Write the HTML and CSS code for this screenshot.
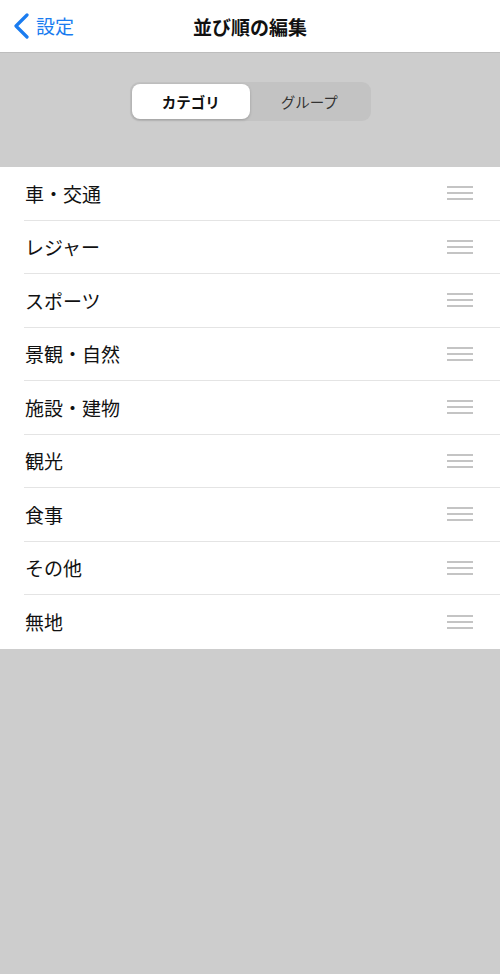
FILE: index.html
```html
<!DOCTYPE html>
<html lang="ja">
<head>
    <meta charset="UTF-8">
    <meta name="viewport" content="width=device-width, initial-scale=1.0">
    <title>並び順の編集</title>
    <link rel="stylesheet" href="styles.css">
</head>
<body>

    <div class="navbar">
        <a class="back" href="#">
            <svg class="chevron" width="17" height="26" viewBox="0 0 17 26">
                <path d="M14 2 L3 13 L14 24" fill="none" stroke="#1a7cf0" stroke-width="3.2" stroke-linecap="round" stroke-linejoin="round"/>
            </svg>
            <span>設定</span>
        </a>
        <h1>並び順の編集</h1>
    </div>

    <div class="header">
        <div class="segment">
            <div class="seg-item active">カテゴリ</div>
            <div class="seg-item">グループ</div>
        </div>
    </div>

    <ul class="list">
        <li><span>車・交通</span><i class="handle"></i></li>
        <li><span>レジャー</span><i class="handle"></i></li>
        <li><span>スポーツ</span><i class="handle"></i></li>
        <li><span>景観・自然</span><i class="handle"></i></li>
        <li><span>施設・建物</span><i class="handle"></i></li>
        <li><span>観光</span><i class="handle"></i></li>
        <li><span>食事</span><i class="handle"></i></li>
        <li><span>その他</span><i class="handle"></i></li>
        <li><span>無地</span><i class="handle"></i></li>
    </ul>

</body>
</html>
```

FILE: styles.css
```css
body {
    margin: 0;
    background-color: #cdcdcd;
    font-family: "Noto Sans CJK JP", "Noto Sans", sans-serif;
    color: #111;
}
.navbar {
    position: relative;
    height: 52px;
    background-color: #fff;
    border-bottom: 1px solid #bdbdbd;
    display: flex;
    align-items: center;
    justify-content: center;
}
.navbar h1 {
    margin: 0;
    font-size: 19px;
    font-weight: bold;
    color: #111;
}
.back {
    position: absolute;
    left: 13px;
    top: 13px;
    display: flex;
    align-items: center;
    gap: 6px;
    color: #1a7cf0;
    text-decoration: none;
    font-size: 19px;
}
.back span {
    line-height: 26px;
}
.header {
    height: 114px;
    display: flex;
    justify-content: center;
    padding-top: 29px;
    box-sizing: border-box;
}
.segment {
    width: 241px;
    height: 39px;
    background-color: #c3c3c3;
    border-radius: 9px;
    padding: 2px;
    box-sizing: border-box;
    display: flex;
}
.seg-item {
    flex: 1;
    display: flex;
    align-items: center;
    justify-content: center;
    font-size: 14.5px;
    color: #333;
    border-radius: 8px;
}
.seg-item.active {
    background-color: #fff;
    font-weight: bold;
    color: #111;
    box-shadow: 0 1px 3px rgba(0, 0, 0, 0.2);
}
.list {
    list-style: none;
    margin: 0;
    padding: 0;
    background-color: #fff;
}
.list li {
    height: 53.5px;
    margin-left: 24px;
    padding-right: 27px;
    box-sizing: border-box;
    display: flex;
    align-items: center;
    justify-content: space-between;
    border-bottom: 1px solid #e4e4e4;
    font-size: 19px;
}
.list li:last-child {
    border-bottom: none;
}
.list li span {
    padding-left: 1px;
}
.handle {
    width: 26px;
    height: 14px;
    background: linear-gradient(#c4c4c4, #c4c4c4) 0 0 / 100% 2px no-repeat,
                linear-gradient(#c4c4c4, #c4c4c4) 0 6px / 100% 2px no-repeat,
                linear-gradient(#c4c4c4, #c4c4c4) 0 12px / 100% 2px no-repeat;
}
```
